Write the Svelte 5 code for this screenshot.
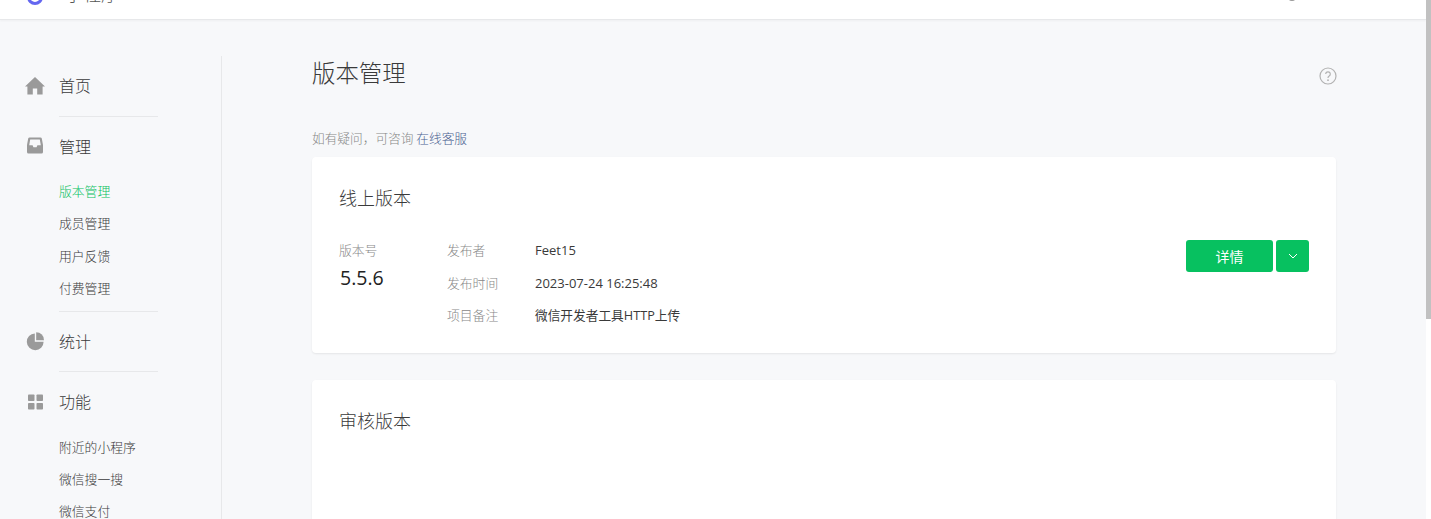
<script>
  const groups = [
    { icon: 'home', label: '首页', divider: true, items: [] },
    { icon: 'inbox', label: '管理', divider: true, items: ['版本管理', '成员管理', '用户反馈', '付费管理'] },
    { icon: 'pie', label: '统计', divider: true, items: [] },
    { icon: 'grid', label: '功能', divider: false, items: ['附近的小程序', '微信搜一搜', '微信支付'] }
  ];
  const active = '版本管理';
  const rows = [
    ['发布者', 'Feet15'],
    ['发布时间', '2023-07-24 16:25:48'],
    ['项目备注', '微信开发者工具HTTP上传']
  ];
</script>

<div class="window">
  <div class="page">
    <header class="topbar">
      <div class="brand">
        <span class="logo"></span>
        <span class="brand-name">小程序</span>
      </div>
      <span class="account"></span>
    </header>

    <div class="body">
      <nav class="sidebar">
        {#each groups as group}
          <div class="group">
            <div class="group-title">
              <svg class="icon" viewBox="0 0 20 20" aria-hidden="true">
                {#if group.icon === 'home'}
                  <path d="M10 1 L20 10.4 H17.6 V18.5 H12.2 V12.6 H7.8 V18.5 H2.4 V10.4 H0 Z" />
                {:else if group.icon === 'inbox'}
                  <path fill-rule="evenodd" d="M4.5 1.5 H15.5 Q16.5 1.5 16.8 2.5 L18 9 V16 Q18 17.5 16.5 17.5 H3.5 Q2 17.5 2 16 V9 L3.2 2.5 Q3.5 1.5 4.5 1.5 Z M5.2 3.5 L4.2 9.2 H7.6 L8.4 11.2 H11.6 L12.4 9.2 H15.8 L14.8 3.5 Z" />
                {:else if group.icon === 'pie'}
                  <path d="M9.8 2.4 V10.8 H18.6 A8.4 8.4 0 1 1 9.8 2.4 Z" />
                  <path d="M11.2 1.2 A7.8 7.8 0 0 1 19 9.2 H11.2 Z" />
                {:else}
                  <rect x="3" y="2.5" width="6.5" height="6.5" rx="0.8" />
                  <rect x="11.5" y="2.5" width="6.5" height="6.5" rx="0.8" />
                  <rect x="3" y="11" width="6.5" height="6.5" rx="0.8" />
                  <rect x="11.5" y="11" width="6.5" height="6.5" rx="0.8" />
                {/if}
              </svg>
              <span>{group.label}</span>
            </div>
            {#if group.items.length}
              <ul>
                {#each group.items as item}
                  <li class:active={item === active}>{item}</li>
                {/each}
              </ul>
            {/if}
            {#if group.divider}<div class="divider"></div>{/if}
          </div>
        {/each}
      </nav>

      <main class="content">
        <div class="heading">
          <h1>版本管理</h1>
          <svg class="help" viewBox="0 0 18 18" aria-label="帮助">
            <circle cx="9" cy="9" r="8" />
            <path d="M6.7 7.1 A2.3 2.3 0 1 1 10.2 9.1 Q9 9.8 9 11" />
            <circle class="dot" cx="9" cy="13.2" r="0.9" />
          </svg>
        </div>
        <p class="notice">如有疑问，可咨询 <a href="#help">在线客服</a></p>

        <section class="card online">
          <h2>线上版本</h2>
          <div class="detail">
            <div class="version">
              <span class="label">版本号</span>
              <strong>5.5.6</strong>
            </div>
            <dl>
              {#each rows as [name, value]}
                <div class="row">
                  <dt>{name}</dt>
                  <dd>{value}</dd>
                </div>
              {/each}
            </dl>
            <div class="actions">
              <button class="btn">详情</button>
              <button class="btn more" aria-label="更多">
                <svg viewBox="0 0 10 6"><path d="M1 1 L5 5 L9 1" /></svg>
              </button>
            </div>
          </div>
        </section>

        <section class="card review">
          <h2>审核版本</h2>
        </section>
      </main>
    </div>
  </div>
  <div class="scrollbar"><div class="thumb"></div></div>
</div>

<style>
  :global(body) {
    margin: 0;
    background: #fff;
  }

  .window {
    display: flex;
    height: 519px;
    overflow: hidden;
    font-family: "Noto Sans CJK SC", "Liberation Sans", sans-serif;
    font-weight: 300;
    color: #3a3a3a;
  }

  .page {
    flex: 1;
    min-width: 0;
    background: #f7f8fa;
    overflow: hidden;
  }

  .scrollbar {
    width: 5px;
    background: #fff;
  }

  .thumb {
    height: 319px;
    background: #c1c1c1;
  }

  .topbar {
    height: 20px;
    box-sizing: border-box;
    background: #fff;
    border-bottom: 1px solid #e7e8ea;
    box-shadow: 0 1px 2px rgba(0, 0, 0, 0.04);
    display: flex;
    justify-content: space-between;
    overflow: hidden;
    padding: 0 130px 0 27px;
  }

  .brand {
    display: flex;
    gap: 22px;
  }

  .logo {
    width: 10px;
    height: 10px;
    margin-top: -11px;
    border: 3px solid #6467f0;
    border-radius: 50%;
  }

  .brand-name {
    margin-top: -19px;
    font-size: 18px;
    line-height: 24px;
    color: #555;
  }

  .account {
    width: 8px;
    height: 8px;
    margin-top: -7px;
    border-radius: 50%;
    background: #999;
  }

  .body {
    display: flex;
    align-items: flex-start;
  }

  .sidebar {
    width: 221px;
    height: 463px;
    margin-top: 36px;
    flex-shrink: 0;
    border-right: 1px solid #e7e8ea;
  }

  .group-title {
    display: flex;
    align-items: center;
    height: 59.5px;
    padding-left: 25px;
    font-size: 16px;
  }

  .group-title span {
    padding-bottom: 1px;
  }

  .icon {
    width: 20px;
    height: 20px;
    margin-right: 14px;
    fill: #9a9a9a;
  }

  .divider {
    height: 1px;
    margin-left: 59px;
    width: 99px;
    background: #e7e8ea;
  }

  ul {
    list-style: none;
    margin: -1px 0 0;
    padding: 0 0 6.5px 59px;
    font-size: 12.8px;
  }

  li {
    height: 32.25px;
    line-height: 32px;
  }

  li.active {
    color: #07c160;
  }

  .content {
    flex: 1;
    min-width: 0;
    padding: 0 90px;
  }

  .heading {
    display: flex;
    justify-content: space-between;
    align-items: center;
    height: 36px;
    margin-top: 34px;
  }

  h1 {
    margin: 0;
    font-size: 23.4px;
    font-weight: 300;
    line-height: 36px;
  }

  .help {
    width: 18px;
    height: 18px;
    margin: 8px -0.5px 0 0;
    fill: none;
    stroke: #b2b2b2;
    stroke-width: 1.2;
  }

  .help .dot {
    fill: #b2b2b2;
    stroke: none;
  }

  .notice {
    margin: 37px 0 0;
    height: 22px;
    line-height: 22px;
    font-size: 12.7px;
    color: #888;
  }

  .notice a {
    color: #4a6090;
    text-decoration: none;
  }

  .card {
    background: #fff;
    border-radius: 4px;
    box-shadow: 0 1px 2px rgba(0, 0, 0, 0.08);
    padding: 26px 27px 0;
    margin-bottom: 27px;
  }

  .online {
    height: 196px;
    box-sizing: border-box;
    margin-top: 8px;
  }

  .review {
    height: 300px;
  }

  h2 {
    margin: 0;
    font-size: 18px;
    font-weight: 300;
    line-height: 28px;
  }

  .detail {
    display: flex;
    align-items: flex-start;
    margin-top: 23px;
    font-size: 12.8px;
  }

  .version {
    width: 108px;
    display: flex;
    flex-direction: column;
  }

  .label,
  dt {
    color: #888;
  }

  .label {
    height: 32px;
    line-height: 32px;
  }

  .version strong {
    font-family: "Open Sans", "Liberation Sans", sans-serif;
    font-size: 19.5px;
    font-weight: 400;
    line-height: 24px;
    margin-left: 1px;
    color: #222;
  }

  dl {
    margin: 0;
    flex: 1;
  }

  .row {
    display: flex;
    height: 32.5px;
    line-height: 32px;
  }

  dt {
    width: 88px;
  }

  dd {
    margin: 0;
    font-family: "Open Sans", "Noto Sans CJK SC", sans-serif;
    font-size: 13px;
    font-weight: 400;
    color: #3a3a3a;
  }

  .row:last-child dd {
    font-size: 12.7px;
  }

  .actions {
    display: flex;
    gap: 3px;
    margin-top: 6px;
  }

  .btn {
    width: 87px;
    height: 32px;
    padding: 0;
    border: 0;
    border-radius: 3px;
    background: #07c160;
    color: #fff;
    font: inherit;
    font-size: 14px;
    font-weight: 400;
  }

  .btn.more {
    width: 33px;
    display: flex;
    align-items: center;
    justify-content: center;
  }

  .btn.more svg {
    width: 10px;
    height: 6px;
    fill: none;
    stroke: #fff;
    stroke-width: 1;
  }
</style>
